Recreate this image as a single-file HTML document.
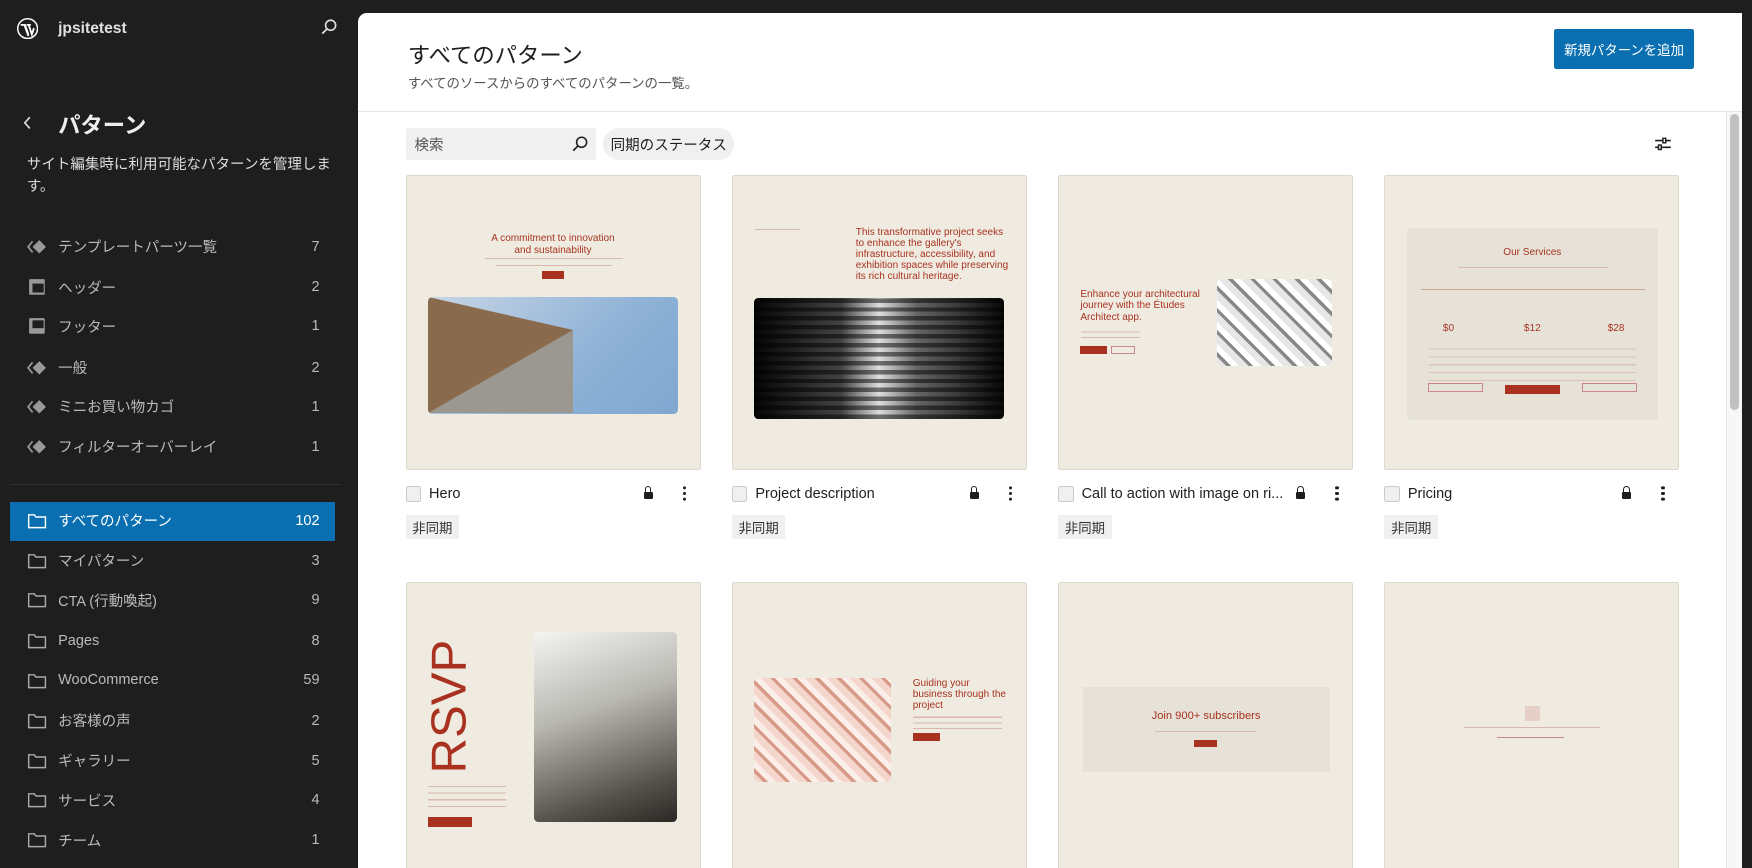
<!DOCTYPE html>
<html><head><meta charset="utf-8"><style>
html{zoom:1.11735}
*{box-sizing:border-box;margin:0;padding:0}
body{width:1568px;height:777px;overflow:hidden;background:#1e1e1e;font-family:"Liberation Sans","Noto Sans CJK JP",sans-serif;position:relative}
.a{position:absolute}
.item{position:absolute;left:24px;width:262px;height:20px;font-size:13px;color:#bbb;display:flex;align-items:center}
.item .ic{width:18px;height:18px;margin-right:10px;display:flex;align-items:center;justify-content:center}
.item .n{margin-left:auto}
.main{left:320px;top:12px;width:1239px;height:765px;background:#fff;border-radius:8px 0 0 0;overflow:hidden}
.card{position:absolute;width:264px;height:264px;background:#efebe1;border:1px solid #ddd8cc;border-radius:2px;overflow:hidden}
.r{color:#a8321f}
.cb{position:absolute;width:14px;height:14px;border:1px solid #ccc;background:#f0f0f0;border-radius:2px}
.tt{position:absolute;font-size:13px;color:#1e1e1e}
.bd{position:absolute;height:21px;padding:0 6px;background:#f0f0f0;font-size:12px;display:flex;align-items:center;color:#333}
.lock{position:absolute;width:8px;height:7px;background:#1e1e1e;border-radius:1px}
.lock:before{content:"";position:absolute;left:1px;top:-5px;width:4px;height:5px;border:1.5px solid #1e1e1e;border-bottom:none;border-radius:3px 3px 0 0}
.dots{position:absolute;width:3px;height:3px;background:#1e1e1e;border-radius:50%;box-shadow:0 -5px 0 #1e1e1e,0 5px 0 #1e1e1e}
.fx{display:flex;align-items:center}
</style></head><body>
<svg class="a" style="left:15px;top:16px" width="19" height="19" viewBox="0 0 20 20"><circle cx="10" cy="10" r="9.3" fill="none" stroke="#fff" stroke-width="1.4"/><path d="M3.5 6.5h4l3.2 9 M7 6.5l3.8 10.5 M9 6.5h4 M11 6.5l3 9 2-6" fill="none" stroke="#fff" stroke-width="1.7"/></svg>
<div class="a" style="left:52px;top:18px;font-size:14px;font-weight:bold;color:#e0e0e0">jpsitetest</div>
<svg class="a" style="left:286px;top:16px" width="16" height="16" viewBox="0 0 16 16"><circle cx="9.5" cy="6.5" r="4.5" fill="none" stroke="#ddd" stroke-width="1.5"/><path d="M6.3 9.7L2 14" stroke="#ddd" stroke-width="1.6"/></svg>
<svg class="a" style="left:20px;top:103px" width="10" height="14" viewBox="0 0 10 14"><path d="M7 2L2.5 7 7 12" fill="none" stroke="#ddd" stroke-width="1.5"/></svg>
<div class="a" style="left:52px;top:97px;font-size:20px;font-weight:bold;color:#eee">パターン</div>
<div class="a" style="left:24px;top:139px;width:275px;font-size:13px;line-height:19px;color:#ddd">サイト編集時に利用可能なパターンを管理します。</div>
<div class="item" style="top:211px"><span class="ic"><svg width="18" height="14" viewBox="0 0 18 14"><path d="M5 2L1 7l4 5" fill="none" stroke="#999" stroke-width="1.5"/><path d="M11 1l6 6-6 6-6-6z" fill="#999"/></svg></span>テンプレートパーツ一覧<span class="n">7</span></div>
<div class="item" style="top:247px"><span class="ic"><svg width="16" height="16"><rect x="1" y="1" width="14" height="14" rx="1" fill="#999"/><rect x="4" y="5" width="10" height="8" fill="#1e1e1e"/></svg></span>ヘッダー<span class="n">2</span></div>
<div class="item" style="top:282px"><span class="ic"><svg width="16" height="16"><rect x="1" y="1" width="14" height="14" rx="1" fill="#999"/><rect x="4" y="3" width="10" height="7" fill="#1e1e1e"/></svg></span>フッター<span class="n">1</span></div>
<div class="item" style="top:319px"><span class="ic"><svg width="18" height="14" viewBox="0 0 18 14"><path d="M5 2L1 7l4 5" fill="none" stroke="#999" stroke-width="1.5"/><path d="M11 1l6 6-6 6-6-6z" fill="#999"/></svg></span>一般<span class="n">2</span></div>
<div class="item" style="top:354px"><span class="ic"><svg width="18" height="14" viewBox="0 0 18 14"><path d="M5 2L1 7l4 5" fill="none" stroke="#999" stroke-width="1.5"/><path d="M11 1l6 6-6 6-6-6z" fill="#999"/></svg></span>ミニお買い物カゴ<span class="n">1</span></div>
<div class="item" style="top:390px"><span class="ic"><svg width="18" height="14" viewBox="0 0 18 14"><path d="M5 2L1 7l4 5" fill="none" stroke="#999" stroke-width="1.5"/><path d="M11 1l6 6-6 6-6-6z" fill="#999"/></svg></span>フィルターオーバーレイ<span class="n">1</span></div>
<div class="a" style="left:9px;top:433px;width:296px;height:1px;background:#2f2f2f"></div>
<div class="a" style="left:9px;top:449px;width:291px;height:35px;background:#0a6fb0"></div>
<div class="item" style="top:456px;color:#fff"><span class="ic"><svg width="18" height="16" viewBox="0 0 18 16"><path d="M1.5 2.5h5l1.5 2h8.5v9.5h-15z" fill="none" stroke="#fff" stroke-width="1.3"/></svg></span>すべてのパターン<span class="n">102</span></div>
<div class="item" style="top:492px"><span class="ic"><svg width="18" height="16" viewBox="0 0 18 16"><path d="M1.5 2.5h5l1.5 2h8.5v9.5h-15z" fill="none" stroke="#aaa" stroke-width="1.3"/></svg></span>マイパターン<span class="n">3</span></div>
<div class="item" style="top:527px"><span class="ic"><svg width="18" height="16" viewBox="0 0 18 16"><path d="M1.5 2.5h5l1.5 2h8.5v9.5h-15z" fill="none" stroke="#aaa" stroke-width="1.3"/></svg></span>CTA (行動喚起)<span class="n">9</span></div>
<div class="item" style="top:564px"><span class="ic"><svg width="18" height="16" viewBox="0 0 18 16"><path d="M1.5 2.5h5l1.5 2h8.5v9.5h-15z" fill="none" stroke="#aaa" stroke-width="1.3"/></svg></span>Pages<span class="n">8</span></div>
<div class="item" style="top:599px"><span class="ic"><svg width="18" height="16" viewBox="0 0 18 16"><path d="M1.5 2.5h5l1.5 2h8.5v9.5h-15z" fill="none" stroke="#aaa" stroke-width="1.3"/></svg></span>WooCommerce<span class="n">59</span></div>
<div class="item" style="top:635px"><span class="ic"><svg width="18" height="16" viewBox="0 0 18 16"><path d="M1.5 2.5h5l1.5 2h8.5v9.5h-15z" fill="none" stroke="#aaa" stroke-width="1.3"/></svg></span>お客様の声<span class="n">2</span></div>
<div class="item" style="top:671px"><span class="ic"><svg width="18" height="16" viewBox="0 0 18 16"><path d="M1.5 2.5h5l1.5 2h8.5v9.5h-15z" fill="none" stroke="#aaa" stroke-width="1.3"/></svg></span>ギャラリー<span class="n">5</span></div>
<div class="item" style="top:706px"><span class="ic"><svg width="18" height="16" viewBox="0 0 18 16"><path d="M1.5 2.5h5l1.5 2h8.5v9.5h-15z" fill="none" stroke="#aaa" stroke-width="1.3"/></svg></span>サービス<span class="n">4</span></div>
<div class="item" style="top:742px"><span class="ic"><svg width="18" height="16" viewBox="0 0 18 16"><path d="M1.5 2.5h5l1.5 2h8.5v9.5h-15z" fill="none" stroke="#aaa" stroke-width="1.3"/></svg></span>チーム<span class="n">1</span></div>

<div class="a main">
<div class="a" style="left:45px;top:22px;font-size:20px;color:#1e1e1e">すべてのパターン</div>
<div class="a" style="left:45px;top:52px;font-size:12px;color:#555">すべてのソースからのすべてのパターンの一覧。</div>
<div class="a fx" style="left:1071px;top:14px;width:125px;height:36px;background:#0a6fb0;border-radius:2px;color:#fff;font-size:12px;justify-content:center;white-space:nowrap">新規パターンを追加</div>
<div class="a" style="left:0;top:87px;width:1239px;height:1px;background:#e6e6e6"></div>
<div class="a fx" style="left:43px;top:103px;width:170px;height:28px;background:#f0f0f0;border-radius:2px;font-size:13px;padding-left:8px;color:#555">検索</div>
<svg class="a" style="left:191px;top:109px" width="16" height="16" viewBox="0 0 16 16"><circle cx="9.5" cy="6.5" r="4.5" fill="none" stroke="#1e1e1e" stroke-width="1.4"/><path d="M6.3 9.7L2 14" stroke="#1e1e1e" stroke-width="1.5"/></svg>
<div class="a fx" style="left:220px;top:103px;width:117px;height:28px;background:#f0f0f0;border-radius:14px;font-size:13px;justify-content:center;color:#1e1e1e">同期のステータス</div>
<svg class="a" style="left:1160px;top:109px" width="16" height="16" viewBox="0 0 16 16"><path d="M1 5h14M1 11h14" stroke="#1e1e1e" stroke-width="1.4"/><rect x="8" y="3" width="2.5" height="4" fill="#fff" stroke="#1e1e1e" stroke-width="1.3"/><rect x="4" y="9" width="2.5" height="4" fill="#fff" stroke="#1e1e1e" stroke-width="1.3"/></svg>
<div class="a" style="left:1225px;top:88px;width:14px;height:677px;background:#f7f7f7;border-left:1px solid #e6e6e6"></div>
<div class="a" style="left:1228px;top:90px;width:8px;height:265px;background:#c1c1c1;border-radius:4px"></div>

<div class="card" style="left:43px;top:145px">
 <div class="a r" style="left:0;width:262px;top:51px;text-align:center;font-size:9px;line-height:10px">A commitment to innovation<br>and sustainability</div>
 <div class="a" style="left:70px;top:73px;width:124px;height:1px;background:#d9b8ae"></div>
 <div class="a" style="left:80px;top:79px;width:104px;height:1px;background:#d9b8ae"></div>
 <div class="a" style="left:121px;top:85px;width:20px;height:7px;background:#a8321f"></div>
 <div class="a" style="left:19px;top:108px;width:224px;height:105px;border-radius:4px;background:linear-gradient(135deg,#c7d6e6,#8fb2d6 60%,#7fa7d0);overflow:hidden">
  <div class="a" style="left:0;top:0;width:0;height:0;border-top:30px solid transparent;border-left:130px solid #8a6a4c;border-bottom:75px solid #9a9890"></div>
 </div>
</div>
<div class="card" style="left:335px;top:145px">
 <div class="a" style="left:20px;top:47px;width:40px;height:1px;background:#d9b8ae"></div>
 <div class="a r" style="left:110px;top:45px;font-size:9px;line-height:10px">This transformative project seeks<br>to enhance the gallery's<br>infrastructure, accessibility, and<br>exhibition spaces while preserving<br>its rich cultural heritage.</div>
 <div class="a" style="left:19px;top:109px;width:224px;height:108px;border-radius:4px;background:linear-gradient(90deg,#050505,#444 35%,#ddd 50%,#666 65%,#080808);"></div>
 <div class="a" style="left:19px;top:109px;width:224px;height:108px;border-radius:4px;background:repeating-linear-gradient(0deg,rgba(0,0,0,.5) 0 4px,transparent 4px 8px)"></div>
</div>
<div class="card" style="left:627px;top:145px">
 <div class="a r" style="left:19px;top:101px;font-size:9px;line-height:10px">Enhance your architectural<br>journey with the Études<br>Architect app.</div>
 <div class="a" style="left:20px;top:135px;width:52px;height:10px;background:repeating-linear-gradient(0deg,#d9b8ae 0 1px,transparent 1px 5px)"></div>
 <div class="a" style="left:19px;top:152px;width:24px;height:7px;background:#a8321f"></div>
 <div class="a" style="left:46px;top:152px;width:22px;height:7px;border:1px solid #c88"></div>
 <div class="a" style="left:141px;top:92px;width:103px;height:78px;border-radius:4px;background:repeating-linear-gradient(45deg,#e6e6e6 0 6px,#888 6px 9px,#fff 9px 14px)"></div>
</div>
<div class="card" style="left:919px;top:145px">
 <div class="a" style="left:19px;top:46px;width:225px;height:172px;background:#e6e2d8;border-radius:2px">
  <div class="a r" style="left:0;width:225px;top:17px;text-align:center;font-size:9px">Our Services</div>
  <div class="a" style="left:46px;top:35px;width:134px;height:1px;background:#d9b8ae"></div>
  <div class="a" style="left:13px;top:55px;width:200px;height:1px;background:#d0a89a"></div>
  <div class="a r" style="left:0;width:75px;top:85px;text-align:center;font-size:9px">$0</div>
  <div class="a r" style="left:75px;width:75px;top:85px;text-align:center;font-size:9px">$12</div>
  <div class="a r" style="left:150px;width:75px;top:85px;text-align:center;font-size:9px">$28</div>
  <div class="a" style="left:20px;top:107px;width:185px;height:30px;background:repeating-linear-gradient(0deg,#dbc3b8 0 1px,transparent 1px 7px)"></div>
  <div class="a" style="left:19px;top:139px;width:49px;height:8px;border:1px solid #c88"></div>
  <div class="a" style="left:88px;top:141px;width:49px;height:8px;background:#a8321f"></div>
  <div class="a" style="left:157px;top:139px;width:49px;height:8px;border:1px solid #c88"></div>
 </div>
</div>
<div class="cb" style="left:43px;top:423px"></div><div class="tt" style="left:64px;top:423px">Hero</div><div class="lock" style="left:256px;top:428px"></div><div class="dots" style="left:291px;top:428px"></div>
<div class="bd" style="left:43px;top:449px">非同期</div>
<div class="cb" style="left:335px;top:423px"></div><div class="tt" style="left:356px;top:423px">Project description</div><div class="lock" style="left:548px;top:428px"></div><div class="dots" style="left:583px;top:428px"></div>
<div class="bd" style="left:335px;top:449px">非同期</div>
<div class="cb" style="left:627px;top:423px"></div><div class="tt" style="left:648px;top:423px">Call to action with image on ri...</div><div class="lock" style="left:840px;top:428px"></div><div class="dots" style="left:875px;top:428px"></div>
<div class="bd" style="left:627px;top:449px">非同期</div>
<div class="cb" style="left:919px;top:423px"></div><div class="tt" style="left:940px;top:423px">Pricing</div><div class="lock" style="left:1132px;top:428px"></div><div class="dots" style="left:1167px;top:428px"></div>
<div class="bd" style="left:919px;top:449px">非同期</div>

<div class="card" style="left:43px;top:509px">
 <div class="a r" style="left:-22px;top:80px;font-size:44px;transform:rotate(-90deg);transform-origin:center;width:120px;height:60px;line-height:60px">RSVP</div>
 <div class="a" style="left:19px;top:178px;width:70px;height:22px;background:repeating-linear-gradient(0deg,#d9b8ae 0 1px,transparent 1px 6px)"></div>
 <div class="a" style="left:19px;top:209px;width:40px;height:9px;background:#a8321f"></div>
 <div class="a" style="left:114px;top:44px;width:128px;height:170px;border-radius:4px;background:linear-gradient(160deg,#f4f4f2,#b9b8b2 40%,#55524c 80%,#2a2824)"></div>
</div>
<div class="card" style="left:335px;top:509px">
 <div class="a" style="left:19px;top:85px;width:123px;height:93px;border-radius:4px;background:repeating-linear-gradient(45deg,#f4d6cc 0 6px,#d79a88 6px 9px,#fbeee8 9px 14px)"></div>
 <div class="a r" style="left:161px;top:85px;font-size:9px;line-height:10px">Guiding your<br>business through the<br>project</div>
 <div class="a" style="left:161px;top:117px;width:80px;height:14px;background:repeating-linear-gradient(0deg,#d9b8ae 0 1px,transparent 1px 5px)"></div>
 <div class="a" style="left:161px;top:134px;width:24px;height:7px;background:#a8321f"></div>
</div>
<div class="card" style="left:627px;top:509px">
 <div class="a" style="left:21px;top:93px;width:221px;height:76px;background:#e6e2d8">
  <div class="a r" style="left:0;width:221px;top:21px;text-align:center;font-size:10px">Join 900+ subscribers</div>
  <div class="a" style="left:65px;top:39px;width:90px;height:1px;background:#d9b8ae"></div>
  <div class="a" style="left:100px;top:47px;width:20px;height:7px;background:#a8321f"></div>
 </div>
</div>
<div class="card" style="left:919px;top:509px">
 <div class="a" style="left:125px;top:110px;width:13px;height:13px;background:#e6cfc6"></div>
 <div class="a" style="left:70px;top:129px;width:122px;height:1px;background:#d9b8ae"></div>
 <div class="a" style="left:100px;top:138px;width:60px;height:1px;background:#c88"></div>
</div>
</div>
</body></html>
